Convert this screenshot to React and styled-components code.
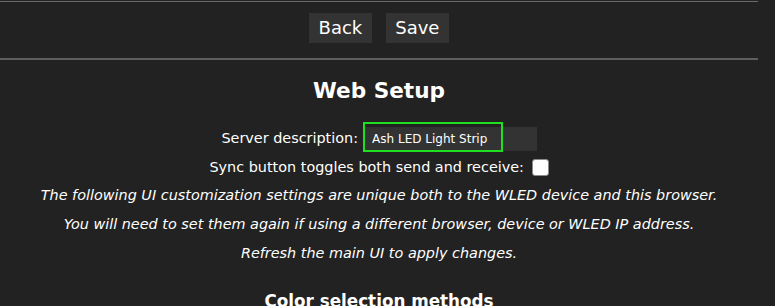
import React from 'react';
import styled, { createGlobalStyle } from 'styled-components';

// 페이지 기본 스타일
const GlobalStyle = createGlobalStyle`
    html, body {
        margin: 0;
        padding: 0;
        background: #222;
    }
    body {
        font-family: "DejaVu Sans", Verdana, sans-serif;
        font-size: 14.4px;
        line-height: 28.8px;
        color: #fff;
        text-align: center;
    }
`;

const Page = styled.div`
    width: 758px;
    padding-top: 1px;
    overflow: hidden;
`;

// 상단 버튼 줄
const TopRow = styled.div`
    display: flex;
    justify-content: center;
    gap: 14px;
    padding: 11px 0 15px;
    border-top: 1px solid #6a6a6a;
    border-bottom: 2px solid #5e5e5e;
    background: #222;
`;

const Btn = styled.button`
    height: 30px;
    padding: 0 9.5px;
    border: none;
    background: #333;
    color: #fff;
    font-family: "DejaVu Sans", Verdana, sans-serif;
    font-size: 18px;
    line-height: 30px;
    cursor: pointer;
`;

const Title = styled.h2`
    margin: 9px 0 11.6px;
    font-size: 21.6px;
    line-height: 43.2px;
    font-weight: bold;
`;

const Line = styled.div`
    line-height: 28.8px;
`;

// 초록 테두리가 입력칸 위에 겹쳐 보임
const Field = styled.span`
    position: relative;
    display: inline-block;

    &::after {
        content: '';
        position: absolute;
        left: 0;
        top: -2px;
        width: 140px;
        height: 30px;
        box-sizing: border-box;
        border: 2px solid #1ee01e;
        pointer-events: none;
    }
`;

const TextInput = styled.input`
    box-sizing: border-box;
    width: 174px;
    height: 24px;
    padding: 0 9.5px;
    border: none;
    background: #333;
    color: #fff;
    font-family: "DejaVu Sans", Verdana, sans-serif;
    font-size: 12px;
    outline: none;
`;

const Check = styled.input`
    appearance: none;
    box-sizing: border-box;
    width: 17px;
    height: 17px;
    margin: 0 0 0 3px;
    vertical-align: -4px;
    background: #fff;
    border: 1.5px solid #8a8a8a;
    border-radius: 3px;
`;

const Note = styled.i`
    display: block;
    line-height: 28.8px;
`;

const SectionTitle = styled.h3`
    margin: 16.8px 0 0;
    font-size: 16.8px;
    line-height: 33.6px;
    font-weight: bold;
`;

const App = () => {
    return (
        <>
            <GlobalStyle />
            <Page>
                <TopRow>
                    <Btn type="button">Back</Btn>
                    <Btn type="submit">Save</Btn>
                </TopRow>
                <Title>Web Setup</Title>
                <Line>
                    Server description:{' '}
                    <Field>
                        <TextInput type="text" defaultValue="Ash LED Light Strip" maxLength={32} />
                    </Field>
                </Line>
                <Line>
                    Sync button toggles both send and receive: <Check type="checkbox" />
                </Line>
                <Note>The following UI customization settings are unique both to the WLED device and this browser.</Note>
                <Note>You will need to set them again if using a different browser, device or WLED IP address.</Note>
                <Note>Refresh the main UI to apply changes.</Note>
                <SectionTitle>Color selection methods</SectionTitle>
            </Page>
        </>
    );
};

export default App;
